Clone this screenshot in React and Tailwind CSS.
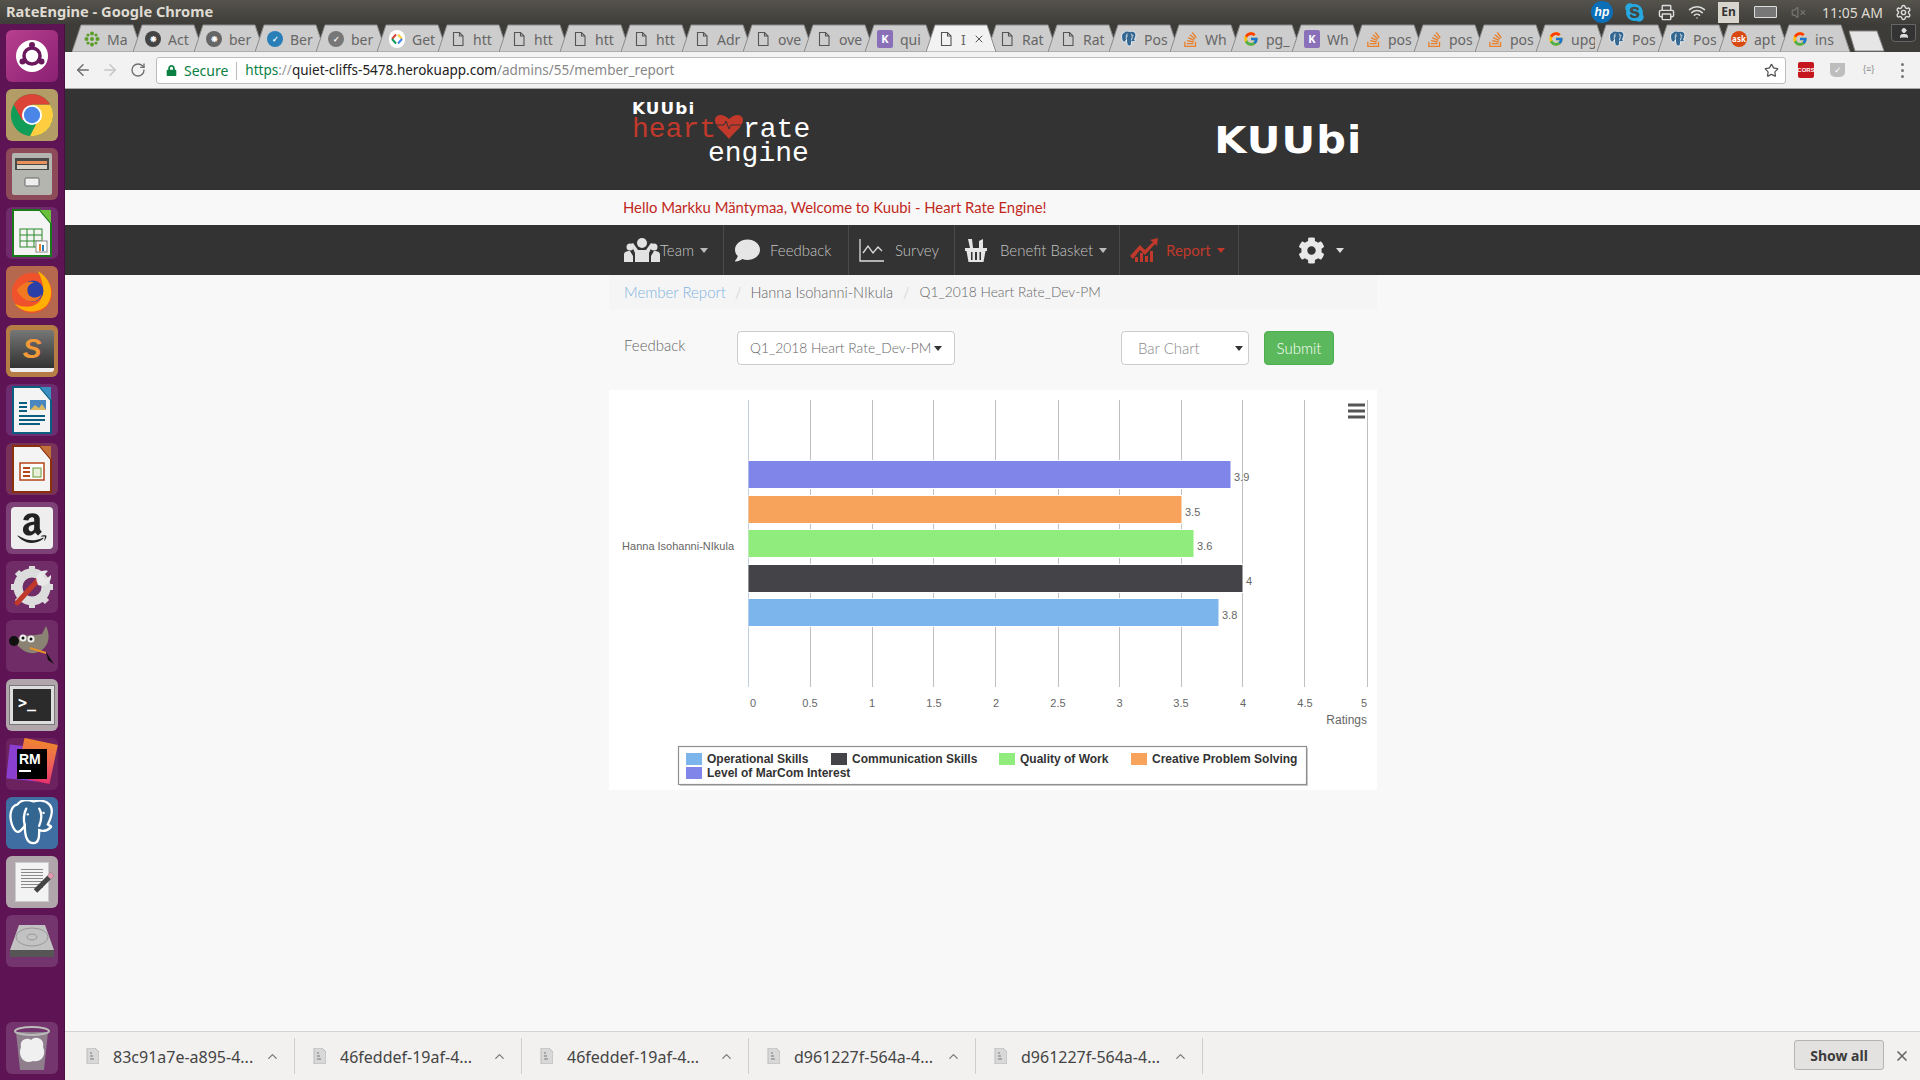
import React from 'react'
import { ArrowLeft, ArrowRight, RotateCw, Star, X, ChevronUp, Printer, Wifi, VolumeX, Settings, User } from 'lucide-react'
import { FaAmazon, FaCog, FaComment, FaLock, FaSkype } from 'react-icons/fa'
import { FcGoogle } from 'react-icons/fc'
import { SiStackoverflow } from 'react-icons/si'

const lato = "font-['Lato','Noto_Sans',sans-serif] font-light"

const Doc = ({ c = '#555', s = 16 }) => (
  <svg width={s} height={s} viewBox="0 0 16 16" fill="none" stroke={c} strokeWidth="1.1">
    <path d="M3.5 1.5h6l3.5 3.5v9.5h-9.5z" />
    <path d="M9.5 1.5v3.5h3.5" />
  </svg>
)

const Dot = ({ c, t, tc = '#fff' }) => (
  <span className="w-[16px] h-[16px] rounded-full flex items-center justify-center text-[8px] font-bold" style={{ background: c, color: tc }}>{t}</span>
)

const Heroku = () => (
  <span className="w-[16px] h-[18px] rounded-[2px] bg-[#8a70b8] text-white text-[11px] font-bold flex items-center justify-center">K</span>
)

// elephant, filled
const Pg = ({ s = 16, body = '#336791', line = '#fff' }) => (
  <svg width={s} height={s} viewBox="0 0 32 32">
    <path d="M6 3C1 4 0 11 2 17c1 3 3 6 5 5 2-1 3-3 4-4 0 5 1 12 6 12 4 0 4-5 4-9 3 1 6 0 8-2 1-1-1-1-2-2 3-6 4-11 1-14-3-3-8-3-11-2-3-1-8-2-11 2Z" fill={body} stroke={line} strokeWidth="1.6" />
    <path d="M12 6c-2 4-2 8-1 12M21 6c2 3 2 7 0 12M13 10h.1M24 9h.1" fill="none" stroke={line} strokeWidth="1.6" strokeLinecap="round" />
  </svg>
)

const So = () => <SiStackoverflow size={15} color="#e8802c" />

const GetIcon = () => (
  <span className="w-[18px] h-[18px] rounded-full bg-white flex items-center justify-center">
    <svg width="12" height="12" viewBox="0 0 12 12" fill="none" strokeWidth="2">
      <path d="M5 1.5L1 6" stroke="#db4437" /><path d="M1 6l4 4.5" stroke="#0f9d58" /><path d="M7 1.5L11 6" stroke="#ffcd40" /><path d="M11 6l-4 4.5" stroke="#4285f4" />
    </svg>
  </span>
)

const tabs = [
  ['Ma', <svg width="16" height="16" viewBox="0 0 16 16" fill="#5a9e28"><circle cx="8" cy="8" r="2" /><circle cx="8" cy="2.5" r="2" /><circle cx="8" cy="13.5" r="2" /><circle cx="2.5" cy="8" r="2" /><circle cx="13.5" cy="8" r="2" /><circle cx="4" cy="4" r="1.6" /><circle cx="12" cy="4" r="1.6" /><circle cx="4" cy="12" r="1.6" /><circle cx="12" cy="12" r="1.6" /></svg>],
  ['Act', <Dot c="#444" t="❋" />],
  ['ber', <Dot c="#666" t="❋" />],
  ['Ber', <Dot c="#2a7fb8" t="✓" />],
  ['ber', <Dot c="#777" t="✓" />],
  ['Get', <GetIcon />],
  ['htt', <Doc />], ['htt', <Doc />], ['htt', <Doc />], ['htt', <Doc />],
  ['Adr', <Doc />], ['ove', <Doc />], ['ove', <Doc />],
  ['qui', <Heroku />],
  ['I', <Doc />, true],
  ['Rat', <Doc />], ['Rat', <Doc />],
  ['Pos', <Pg />],
  ['Wh', <So />],
  ['pg_', <FcGoogle size={16} />],
  ['Wh', <Heroku />],
  ['pos', <So />],
  ['pos', <So />],
  ['pos', <So />],
  ['upg', <FcGoogle size={16} />],
  ['Pos', <Pg />],
  ['Pos', <Pg />],
  ['apt', <Dot c="#d9480f" t="ask" />],
  ['ins', <FcGoogle size={16} />],
]

const Tab = ({ label, icon, active, first }) => (
  <div className={`relative w-[71px] h-[28px] shrink-0 ${first ? 'ml-[7px]' : '-ml-[10px]'} ${active ? 'z-10' : ''}`}>
    <svg className="absolute inset-0" width="71" height="28" viewBox="0 0 71 28">
      <path d="M0 28 L9 1 H61 L70 28 Z" fill={active ? '#f2f2f2' : '#cdcdcd'} stroke="#8c8c8c" />
    </svg>
    <div className="relative flex items-center h-full pl-[12px] pt-[2px]">
      <span className="w-[16px] flex justify-center shrink-0">{icon}</span>
      <span className="ml-[7px] w-[24px] overflow-hidden whitespace-nowrap text-[14px] text-[#666] font-['Noto_Sans',sans-serif]">{label}</span>
      {active && <X size={12} className="text-[#555] -ml-[12px]" />}
    </div>
  </div>
)

const TitleBar = () => (
  <div className="h-[24px] shrink-0 flex items-center bg-gradient-to-b from-[#55534c] to-[#3e3d39] text-[#dfdbd2]">
    <span className="ml-[6px] text-[14.6px] font-bold font-['Noto_Sans',sans-serif]">RateEngine - Google Chrome</span>
    <div className="ml-auto flex items-center">
      <span className="w-[22px] h-[22px] rounded-full bg-[#0b6fb8] text-white text-[12px] italic font-bold flex items-center justify-center font-['Liberation_Sans',sans-serif]">hp</span>
      <FaSkype size={21} className="ml-[11px] text-[#25a9e0]" />
      <Printer size={17} className="ml-[13px] text-[#ddd]" />
      <Wifi size={18} className="ml-[13px] text-[#ddd]" />
      <span className="ml-[12px] w-[21px] h-[21px] bg-[#d8d5cc] text-[#333] text-[12px] font-bold flex items-center justify-center font-['Noto_Sans',sans-serif]">En</span>
      <span className="ml-[15px] w-[23px] h-[12px] border border-[#ddd] bg-[#777] rounded-[1px]"></span>
      <VolumeX size={15} className="ml-[14px] text-[#77756e]" />
      <span className="ml-[16px] text-[14px] font-['Noto_Sans',sans-serif]">11:05 AM</span>
      <Settings size={17} className="ml-[12px] mr-[8px] text-[#ddd]" />
    </div>
  </div>
)

const tile = 'w-[52px] h-[52px] rounded-[6px] flex items-center justify-center shrink-0'

const Launcher = () => (
  <div className="w-[65px] shrink-0 bg-[#5e1354] flex flex-col items-center pt-[6px] gap-[7px] border-r border-[#4a0f42]">
    <div className={`${tile} bg-gradient-to-br from-[#b8408f] to-[#8a1f72]`}>
      <svg width="36" height="36" viewBox="0 0 36 36"><circle cx="18" cy="18" r="16" fill="#fff" /><circle cx="18" cy="18" r="8" fill="none" stroke="#6a1a5c" strokeWidth="3.5" /><circle cx="18" cy="7" r="3" fill="#6a1a5c" /><circle cx="8.5" cy="23.5" r="3" fill="#6a1a5c" /><circle cx="27.5" cy="23.5" r="3" fill="#6a1a5c" /></svg>
    </div>
    <div className={`${tile} bg-[#b39c66]`}>
      <svg width="46" height="46" viewBox="0 0 48 48"><circle cx="24" cy="24" r="22" fill="#0f9d58" /><path d="M43 13A22 22 0 0 1 22 46L33 24 24 13Z" fill="#ffcd40" /><path d="M5 13A22 22 0 0 1 43 13H24L14 30Z" fill="#db4437" /><circle cx="24" cy="24" r="10.5" fill="#fff" /><circle cx="24" cy="24" r="8.5" fill="#4a86e8" /></svg>
    </div>
    <div className={`${tile} bg-[#8d4a58]`}>
      <svg width="42" height="44" viewBox="0 0 42 44"><rect x="1" y="1" width="40" height="42" rx="2" fill="#b5b5b0" /><rect x="4" y="6" width="34" height="12" fill="#4a4a48" /><rect x="6" y="9" width="30" height="3" fill="#e8915a" /><rect x="6" y="13" width="30" height="4" fill="#d8d3c8" /><rect x="14" y="26" width="14" height="8" rx="1" fill="#eee" stroke="#666" /></svg>
    </div>
    <div className={`${tile} bg-[#6f2b6b]`}>
      <svg width="40" height="48" viewBox="0 0 40 48"><path d="M1 1H28L39 14V47H1Z" fill="#f4f4f4" stroke="#1a7a1a" strokeWidth="2" /><path d="M28 1H39V14Z" fill="#6abf3c" /><g fill="none" stroke="#2a8a2a"><rect x="8" y="20" width="22" height="18" /><path d="M8 26H30M8 32H30M15 20V38M22 20V38" /></g><rect x="24" y="32" width="11" height="11" fill="#fff" stroke="#888" /><rect x="27" y="35" width="2" height="7" fill="#e8802c" /><rect x="30" y="36" width="2" height="6" fill="#2a7fb8" /></svg>
    </div>
    <div className={`${tile} bg-[#b5684d]`}>
      <svg width="46" height="46" viewBox="0 0 48 48"><circle cx="24" cy="25" r="21" fill="#f0532c" /><path d="M30 2C44 10 48 26 40 37 32 47 14 47 6 36 16 42 30 40 34 30 38 20 34 10 30 2Z" fill="#ffb000" /><circle cx="25" cy="23" r="11" fill="#2b3fa8" /><path d="M8 22C14 14 22 12 26 14 20 16 18 20 20 26 24 32 32 30 34 26 32 36 16 38 8 22Z" fill="#f07820" /></svg>
    </div>
    <div className={`${tile} bg-[#b57c46]`}>
      <div className="w-[44px] h-[42px] rounded-[3px] bg-gradient-to-b from-[#777] to-[#333] border-b-[4px] border-[#eee] flex items-center justify-center text-[#f29a38] text-[28px] font-bold italic font-['Liberation_Sans',sans-serif]">S</div>
    </div>
    <div className={`${tile} bg-[#6d2c6f]`}>
      <svg width="40" height="48" viewBox="0 0 40 48"><path d="M1 1H28L39 14V47H1Z" fill="#f4f4f4" stroke="#0a5f80" strokeWidth="2" /><path d="M28 1H39V14Z" fill="#3a8ec0" /><rect x="18" y="14" width="16" height="10" fill="#4a86c0" /><path d="M18 24l5-5 4 3 3-4 4 6z" fill="#d8b860" /><path d="M7 17H15M7 21H15M7 25H15M7 30H33M7 34H33M7 38H28" stroke="#0a5f80" strokeWidth="2" /></svg>
    </div>
    <div className={`${tile} bg-[#7a3358]`}>
      <svg width="40" height="48" viewBox="0 0 40 48"><path d="M1 1H28L39 14V47H1Z" fill="#f4f4f4" stroke="#8a2f0a" strokeWidth="2" /><path d="M28 1H39V14Z" fill="#c2703a" /><rect x="8" y="18" width="24" height="17" fill="#fff" stroke="#b5451a" strokeWidth="1.5" /><path d="M11 23H18M11 27H18M11 31H18" stroke="#b5451a" strokeWidth="2" /><rect x="21" y="23" width="8" height="9" fill="#e8f0d8" stroke="#6a9a3a" /></svg>
    </div>
    <div className={`${tile} bg-[#7c4278]`}>
      <div className="w-[42px] h-[42px] rounded-[4px] bg-[#eee] flex items-center justify-center"><FaAmazon size={34} className="text-[#222]" /></div>
    </div>
    <div className={`${tile} bg-[#6f2c66]`}>
      <svg width="44" height="44" viewBox="0 0 44 44"><circle cx="22" cy="22" r="14" fill="none" stroke="#dcdcdc" strokeWidth="9" /><g stroke="#dcdcdc" strokeWidth="6"><path d="M22 1V9M22 35V43M1 22H9M35 22H43M7 7L13 13M31 31L37 37M7 37L13 31" /></g><path d="M7 38L28 15" stroke="#c0392b" strokeWidth="5" strokeLinecap="round" /><path d="M27 17C24 10 31 4 38 6L33 11 36 14 41 10C42 17 35 23 28 20Z" fill="#e8e8e8" /></svg>
    </div>
    <div className={`${tile} bg-[#6f2c66]`}>
      <svg width="48" height="40" viewBox="0 0 48 40">
        <path d="M6 14C14 8 26 10 34 8L38 0C42 8 42 18 34 24 26 30 14 28 6 14Z" fill="#8a8272" />
        <circle cx="6" cy="15" r="5" fill="#111" /><circle cx="15" cy="12" r="3.5" fill="#eee" /><circle cx="23" cy="13" r="3.5" fill="#eee" /><circle cx="15" cy="12" r="1.5" fill="#111" /><circle cx="23" cy="13" r="1.5" fill="#111" />
        <path d="M22 22L38 27" stroke="#e8902c" strokeWidth="2" /><path d="M38 26L46 38 40 34Z" fill="#111" />
      </svg>
    </div>
    <div className={`${tile} bg-[#b0a6ab]`}>
      <div className="w-[44px] h-[38px] bg-[#2b2b2b] border-[3px] border-[#ddd] outline outline-1 outline-[#777] text-white text-[15px] font-bold pl-[5px] pt-[3px] font-['DejaVu_Sans_Mono',monospace]">&gt;_</div>
    </div>
    <div className={`${tile} bg-[#6d2260] relative overflow-hidden`}>
      <span className="absolute left-[2px] top-[8px] w-[30px] h-[34px] bg-[#8a3fd0] rotate-6"></span>
      <span className="absolute right-[4px] top-[3px] w-[34px] h-[40px] bg-gradient-to-b from-[#f0842c] to-[#e82f6c] rotate-12"></span>
      <div className="relative w-[30px] h-[30px] bg-black text-white text-[14px] font-bold leading-[16px] pl-[2px] pt-[2px] font-['Liberation_Sans',sans-serif]">RM<div className="w-[12px] h-[2px] bg-white mt-[3px]"></div></div>
    </div>
    <div className={`${tile} bg-[#3f6ea3]`}><Pg s={46} body="#336791" /></div>
    <div className={`${tile} bg-[#b0a5aa]`}>
      <div className="relative w-[34px] h-[40px] bg-[#f3f3f3] border border-[#ccc]">
        <div className="absolute left-[5px] top-[6px] w-[22px] h-[20px] bg-[repeating-linear-gradient(#888_0,#888_1px,transparent_1px,transparent_3px)]"></div>
        <span className="absolute left-[16px] top-[17px] w-[24px] h-[5px] bg-[#444] -rotate-45 border-r-[5px] border-[#e29ab0]"></span>
      </div>
    </div>
    <div className={`${tile} bg-[#74346d]`}>
      <svg width="46" height="36" viewBox="0 0 46 36"><path d="M10 2H36L45 27V34H1V27Z" fill="#c2c2c2" /><ellipse cx="23" cy="14" rx="16" ry="9" fill="none" stroke="#999" /><ellipse cx="23" cy="14" rx="5" ry="3" fill="none" stroke="#999" /><rect x="1" y="27" width="44" height="7" fill="#555" /></svg>
    </div>
    <div className={`${tile} bg-[#74346d] mt-auto mb-[6px]`}>
      <svg width="38" height="46" viewBox="0 0 38 46"><path d="M3 7H35L31 45H7Z" fill="#8f7f8d" /><ellipse cx="19" cy="6" rx="17" ry="4" fill="none" stroke="#bbb" strokeWidth="2" /><path d="M8 22C6 14 15 12 18 15 23 10 32 14 30 22 34 30 28 38 20 36 12 40 4 32 8 22Z" fill="#f0f0f0" /></svg>
    </div>
  </div>
)

const Toolbar = () => (
  <div className="h-[37px] shrink-0 bg-[#f2f2f2] border-b border-[#a8a8a8] flex items-center">
    <ArrowLeft size={18} className="ml-[9px] text-[#6e6e6e]" />
    <ArrowRight size={18} className="ml-[9px] text-[#c6c6c6]" />
    <RotateCw size={16} className="ml-[11px] text-[#6e6e6e]" />
    <div className="ml-[10px] w-[1630px] h-[27px] pt-[1px] bg-white border border-[#bdbdbd] rounded-[3px] flex items-center font-['Noto_Sans',sans-serif] text-[13.5px]">
      <FaLock size={11} className="ml-[9px] text-[#0b8043]" />
      <span className="ml-[7px] text-[14px] text-[#0b8043]">Secure</span>
      <span className="ml-[8px] w-px h-[18px] bg-[#bbb]"></span>
      <span className="ml-[8px] text-[#0b8043]">https</span>
      <span className="text-[#999]">://</span>
      <span className="text-[#222]">quiet-cliffs-5478.herokuapp.com</span>
      <span className="text-[#888]">/admins/55/member_report</span>
      <Star size={15} className="ml-auto mr-[6px] text-[#555]" />
    </div>
    <span className="ml-[12px] w-[16px] h-[16px] rounded-[2px] bg-[#c4161c] text-white text-[6px] font-bold flex items-center justify-center font-['Liberation_Sans',sans-serif]">CORS</span>
    <span className="ml-[16px] w-[15px] h-[14px] rounded-b-[5px] bg-[#bdbdbd] text-white text-[9px] flex items-center justify-center">✓</span>
    <span className="ml-[18px] text-[9px] text-[#888] font-['Liberation_Sans',sans-serif]">{'{≡}'}</span>
    <span className="ml-[27px] flex flex-col gap-[3px]">
      <i className="w-[3px] h-[3px] rounded-full bg-[#777]"></i>
      <i className="w-[3px] h-[3px] rounded-full bg-[#777]"></i>
      <i className="w-[3px] h-[3px] rounded-full bg-[#777]"></i>
    </span>
  </div>
)

const Caret = ({ c = 'border-t-[#bbb]' }) => (
  <span className={`block w-0 h-0 border-x-[4.5px] border-x-transparent border-t-[5px] ${c}`}></span>
)

const Header = () => (
  <div className="h-[101px] shrink-0 bg-[#333] flex pl-[567px]">
    <div className="w-[730px] flex justify-between">
      <div className="relative w-[180px] pt-[13px]">
        <div className="w-fit origin-left scale-x-[1.12] text-white text-[15px] font-bold leading-[15px] tracking-[1px] font-['DejaVu_Sans',sans-serif]">KUUbi</div>
        <div className="flex h-[24px] mt-[1px] text-[28px] leading-[24px] font-['Liberation_Mono',monospace]">
          <span className="text-[#c0392b]">heart</span>
          <span className="w-[27px]"></span>
          <span className="text-white">rate</span>
        </div>
        <div className="pl-[76px] text-[28px] leading-[24px] text-white font-['Liberation_Mono',monospace]">engine</div>
        <svg className="absolute left-[82px] top-[24px]" width="30" height="28" viewBox="0 0 30 28">
          <path d="M15 26C9 18 1 14 1 7 1 2 8-1 15 6 22-1 29 2 29 7 29 14 21 18 15 26Z" fill="#c0392b" />
          <path d="M1 12H10L12 8 15 16 17 12H29" fill="none" stroke="#333" strokeWidth="1" />
        </svg>
      </div>
      <div className="mt-[30px] h-[44px] origin-right scale-x-[1.12] text-white text-[37px] font-bold leading-[44px] tracking-[1px] font-['DejaVu_Sans',sans-serif]">KUUbi</div>
    </div>
  </div>
)

const NavItem = ({ w, children, sep = true }) => (
  <div className={`h-full flex items-center shrink-0 ${sep ? 'border-r border-[#4a4a4a]' : ''}`} style={{ width: w }}>{children}</div>
)

const Nav = () => (
  <div className={`h-[50px] shrink-0 bg-[#333] flex pl-[544px] text-[15px] text-[#c4c4c4] ${lato}`}>
    <NavItem w={115}>
      <svg className="ml-[15px]" width="36" height="24" viewBox="0 0 36 24" fill="#e2e2e2">
        <circle cx="18" cy="5" r="5" /><circle cx="6" cy="9" r="3.5" /><circle cx="30" cy="9" r="3.5" />
        <path d="M11 24V15L7 6 9 5 14 12H22L27 5 29 6 25 15V24Z" /><path d="M0 24V16C1 13 4 13 6 13L9 18V24ZM36 24V16C35 13 32 13 30 13L27 18V24Z" />
      </svg>
      <span>Team</span>
      <span className="ml-[6px]"><Caret /></span>
    </NavItem>
    <NavItem w={125}>
      <FaComment size={25} className="ml-[11px] text-[#e6e6e6]" />
      <span className="ml-[10px]">Feedback</span>
    </NavItem>
    <NavItem w={106}>
      <svg className="ml-[10px]" width="25" height="24" viewBox="0 0 25 24" fill="none" stroke="#ddd" strokeWidth="1.3">
        <path d="M1 1V23H25" /><path d="M4 15L9 8 14 15 19 9 23 13" />
      </svg>
      <span className="ml-[11px]">Survey</span>
    </NavItem>
    <NavItem w={165}>
      <svg className="ml-[10px]" width="22" height="24" viewBox="0 0 22 24" fill="#e6e6e6">
        <path d="M3 1H7L8 10H5ZM14 3L18 1 18 10H14Z" /><path d="M0 10H22V13H20.5L18.5 24H3.5L1.5 13H0ZM6 14V22H7.5V14ZM10 14V22H12V14ZM14.5 14V22H16V14Z" fillRule="evenodd" />
      </svg>
      <span className="ml-[13px]">Benefit Basket</span>
      <span className="ml-[6px]"><Caret /></span>
    </NavItem>
    <NavItem w={119}>
      <svg className="ml-[10px]" width="28" height="24" viewBox="0 0 28 24" fill="#c0392b">
        <path d="M0 18L10 7 15 12 23 4 20 2 28 0 27 8 25 6 15 17 10 12 3 21Z" />
        <rect x="10" y="15" width="3" height="9" /><rect x="15" y="18" width="3" height="6" /><rect x="20" y="13" width="3" height="11" /><rect x="5" y="19" width="3" height="5" />
      </svg>
      <span className="ml-[8px] font-normal text-[#c0392b]">Report</span>
      <span className="ml-[6px]"><Caret c="border-t-[#c0392b]" /></span>
    </NavItem>
    <NavItem w={120} sep={false}>
      <FaCog size={27} className="ml-[59px] text-[#e8e8e8]" />
      <span className="ml-[11px]"><Caret c="border-t-[#ddd]" /></span>
    </NavItem>
  </div>
)

const Breadcrumb = () => (
  <div className={`h-[35px] bg-[#f5f5f5] flex items-center pl-[15px] text-[15px] text-[#666] ${lato}`}>
    <span className="text-[#7fb3e0]">Member Report</span>
    <span className="mx-[9px] text-[#ccc]">/</span>
    <span className="text-[14.6px]">Hanna Isohanni-NIkula</span>
    <span className="mx-[10px] text-[#ccc]">/</span>
    <span className="text-[13.8px]">Q1_2018 Heart Rate_Dev-PM</span>
  </div>
)

const FormRow = () => (
  <div className={`mt-[21px] h-[34px] flex text-[15px] text-[#666] ${lato}`}>
    <span className="w-[128px] pl-[15px] leading-[28px]">Feedback</span>
    <div className="w-[218px] h-full bg-white border border-[#ccc] rounded-[4px] flex items-center pl-[12px]">
      <span className="whitespace-nowrap text-[13.8px]">Q1_2018 Heart Rate_Dev-PM</span>
      <span className="ml-[3px]"><Caret c="border-t-[#333]" /></span>
    </div>
    <div className="ml-[166px] w-[128px] h-full bg-white border border-[#ccc] rounded-[4px] flex items-center pl-[16px] text-[#888]">
      Bar Chart
      <span className="ml-auto mr-[5px]"><Caret c="border-t-[#333]" /></span>
    </div>
    <div className="ml-[15px] w-[70px] h-full bg-[#5cb85c] border border-[#4cae4c] rounded-[4px] flex items-center justify-center text-white">Submit</div>
  </div>
)

const gridX = [139.5, 201.5, 263.5, 324.5, 386.5, 449.5, 510.5, 572.5, 633.5, 695.5, 758.5]
const axis = [['0', 144], ['0.5', 201], ['1', 263], ['1.5', 325], ['2', 387], ['2.5', 449], ['3', 510.5], ['3.5', 572], ['4', 634], ['4.5', 696], ['5', 755]]
const bars = [
  ['3.9', 71, 482, '#8085e9', 625, 88],
  ['3.5', 106, 433, '#f7a35c', 576, 123],
  ['3.6', 140, 445, '#90ed7d', 588, 157],
  ['4', 175, 494, '#434348', 637, 192],
  ['3.8', 209, 470, '#7cb5ec', 613, 226],
]
const legend = [
  ['Operational Skills', '#7cb5ec', 77, 363, 98],
  ['Communication Skills', '#434348', 222, 363, 243],
  ['Quality of Work', '#90ed7d', 390, 363, 411],
  ['Creative Problem Solving', '#f7a35c', 522, 363, 543],
  ['Level of MarCom Interest', '#8085e9', 77, 377, 98],
]

const Chart = () => (
  <div className="mt-[25px] h-[400px] bg-white">
    <svg width="768" height="400" viewBox="0 0 768 400" className="font-['Liberation_Sans',sans-serif]">
      {gridX.map((x, i) => (
        <line key={x} x1={x} x2={x} y1="10" y2="297" stroke={i === 0 ? '#c0d0e0' : '#c0c0c0'} />
      ))}
      {bars.map(([v, y, w, c, lx, ly]) => (
        <g key={y}>
          <rect x="139.5" y={y - 1} width={w + 1} height="29" fill="#fff" />
          <rect x="139.5" y={y} width={w} height="27" fill={c} />
          <text x={lx} y={ly} fontSize="11" fill="#666" dominantBaseline="middle">{v}</text>
        </g>
      ))}
      <text x="125" y="157" fontSize="11" fill="#666" textAnchor="end" dominantBaseline="middle">Hanna Isohanni-NIkula</text>
      {axis.map(([t, x]) => (
        <text key={t} x={x} y="314" fontSize="11" fill="#666" textAnchor="middle" dominantBaseline="middle">{t}</text>
      ))}
      <text x="758" y="331" fontSize="12" fill="#666" textAnchor="end" dominantBaseline="middle">Ratings</text>
      <path d="M739 15H756M739 21H756M739 27H756" stroke="#555" strokeWidth="3" />
      <rect x="71" y="358" width="628" height="38" fill="#000" opacity="0.2" />
      <rect x="69.5" y="356.5" width="628" height="38" fill="#fff" stroke="#909090" strokeWidth="1.2" />
      {legend.map(([t, c, x, y, tx]) => (
        <g key={t}>
          <rect x={x} y={y} width="16" height="12" fill={c} />
          <text x={tx} y={y + 7} fontSize="12" fontWeight="bold" fill="#333" dominantBaseline="middle">{t}</text>
        </g>
      ))}
    </svg>
  </div>
)

const downloads = ['83c91a7e-a895-4...', '46feddef-19af-4...', '46feddef-19af-4...', 'd961227f-564a-4...', 'd961227f-564a-4...']

const Downloads = () => (
  <div className="h-[49px] shrink-0 bg-[#f2f1f0] border-t border-[#d5d3d0] flex items-center font-['Noto_Sans',sans-serif] text-[16px] text-[#444]">
    {downloads.map((d, i) => (
      <div key={i} className={`h-[36px] w-[227px] shrink-0 flex items-center border-r border-[#d0cecb] ${i === 0 ? 'ml-[3px]' : ''}`}>
        <svg className="ml-[18px]" width="13" height="16" viewBox="0 0 13 16"><path d="M1 0H9L13 4V16H1Z" fill="#d8d8d8" stroke="#bbb" /><path d="M4 5H6M4 8H7M4 11H8" stroke="#777" /></svg>
        <span className="ml-[14px] w-[144px] pt-[2px] whitespace-nowrap">{d}</span>
        <ChevronUp size={15} className="ml-[8px] text-[#777]" />
      </div>
    ))}
    <div className="ml-auto w-[90px] h-[30px] mb-[2px] bg-[#e3e2e0] border border-[#b5b3b0] rounded-[3px] flex items-center justify-center font-bold text-[14px] text-[#3c3c3c]">Show all</div>
    <X size={16} strokeWidth={2.5} className="ml-[10px] mr-[10px] text-[#666]" />
  </div>
)

export default function App() {
  return (
    <div className="w-[1920px] h-[1080px] overflow-hidden flex flex-col bg-[#f8f8f8]">
      <TitleBar />
      <div className="flex-1 flex min-h-0">
        <Launcher />
        <div className="flex-1 min-w-0 flex flex-col">
          <div className="h-[28px] shrink-0 bg-[#3d3c38] flex">
            {tabs.map(([label, icon, active], i) => (
              <Tab key={i} label={label} icon={icon} active={active} first={i === 0} />
            ))}
            <svg className="shrink-0 ml-[-2px] mt-[6px]" width="36" height="22" viewBox="0 0 36 22"><path d="M0 1H28L35 21H6Z" fill="#e6e6e6" stroke="#888" /></svg>
            <div className="ml-[6px] w-[25px] h-[18px] bg-[#333] border border-[#666] rounded-b-[4px] flex items-center justify-center">
              <User size={12} className="text-[#ddd]" fill="#ddd" />
            </div>
          </div>
          <Toolbar />
          <Header />
          <div className="h-[35px] shrink-0 flex items-center pl-[558px] text-[14.85px] text-[#c0281c] font-['Lato','Noto_Sans',sans-serif]">
            Hello Markku Mäntymaa, Welcome to Kuubi - Heart Rate Engine!
          </div>
          <Nav />
          <div className="flex-1 min-h-0 ml-[544px] w-[768px]">
            <Breadcrumb />
            <FormRow />
            <Chart />
          </div>
          <Downloads />
        </div>
      </div>
    </div>
  )
}
